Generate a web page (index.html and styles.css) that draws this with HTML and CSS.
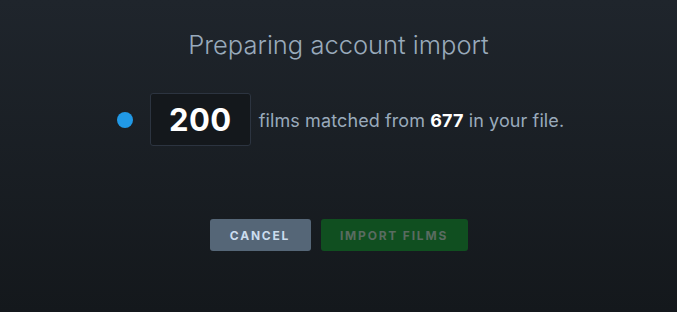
FILE: index.html
```html
<!DOCTYPE html>
<html lang="en">
<head>
    <meta charset="UTF-8">
    <meta name="viewport" content="width=device-width, initial-scale=1.0">
    <title>Import</title>
    <link rel="stylesheet" href="styles.css">
</head>
<body>

    <!-- Import summary -->
    <div class="import-panel">
        <h1>Preparing account import</h1>

        <div class="match-row">
            <span class="status-dot"></span>
            <span class="count-box">200</span>
            <p class="match-text">films matched from <strong>677</strong> in your file.</p>
        </div>

        <div class="actions">
            <button class="btn btn-cancel">Cancel</button>
            <button class="btn btn-import" disabled>Import films</button>
        </div>
    </div>

</body>
</html>
```

FILE: styles.css
```css
/* General */
* {
    box-sizing: border-box;
    margin: 0;
    padding: 0;
    font-family: 'Inter', 'Liberation Sans', sans-serif;
}

html, body {
    height: 100%;
}

body {
    background: linear-gradient(to bottom, #1f252c, #14181c);
    color: #99aabb;
}

.import-panel {
    display: flex;
    flex-direction: column;
    align-items: center;
    padding-top: 29px;
}

/* Title */
h1 {
    font-size: 25.5px;
    font-weight: 300;
    line-height: 32px;
    color: #99aabb;
}

/* Match row */
.match-row {
    display: flex;
    align-items: center;
    margin-top: 32px;
    margin-left: 4px;
}

.status-dot {
    width: 16px;
    height: 16px;
    border-radius: 50%;
    background: #2199e6;
    margin-right: 17px;
}

.count-box {
    width: 101px;
    height: 53px;
    display: flex;
    align-items: center;
    justify-content: center;
    background: #14181c;
    border: 1px solid #2c3440;
    border-radius: 3px;
    color: #ffffff;
    font-size: 31px;
    font-weight: 700;
    letter-spacing: 0.5px;
    margin-right: 8px;
}

.match-text {
    font-size: 18px;
    letter-spacing: 0.1px;
    color: #99aabb;
    padding-top: 1px;
}

.match-text strong {
    color: #ffffff;
    font-weight: 700;
}

/* Buttons */
.actions {
    display: flex;
    gap: 10px;
    margin-top: 73px;
}

.btn {
    height: 32px;
    border: none;
    border-radius: 3px;
    font-size: 12px;
    font-weight: 700;
    letter-spacing: 1.8px;
    text-transform: uppercase;
}

.btn-cancel {
    width: 101px;
    background: #556677;
    color: #ccddee;
}

.btn-import {
    width: 147px;
    background: #104f20;
    color: #5a6b60;
}
```
